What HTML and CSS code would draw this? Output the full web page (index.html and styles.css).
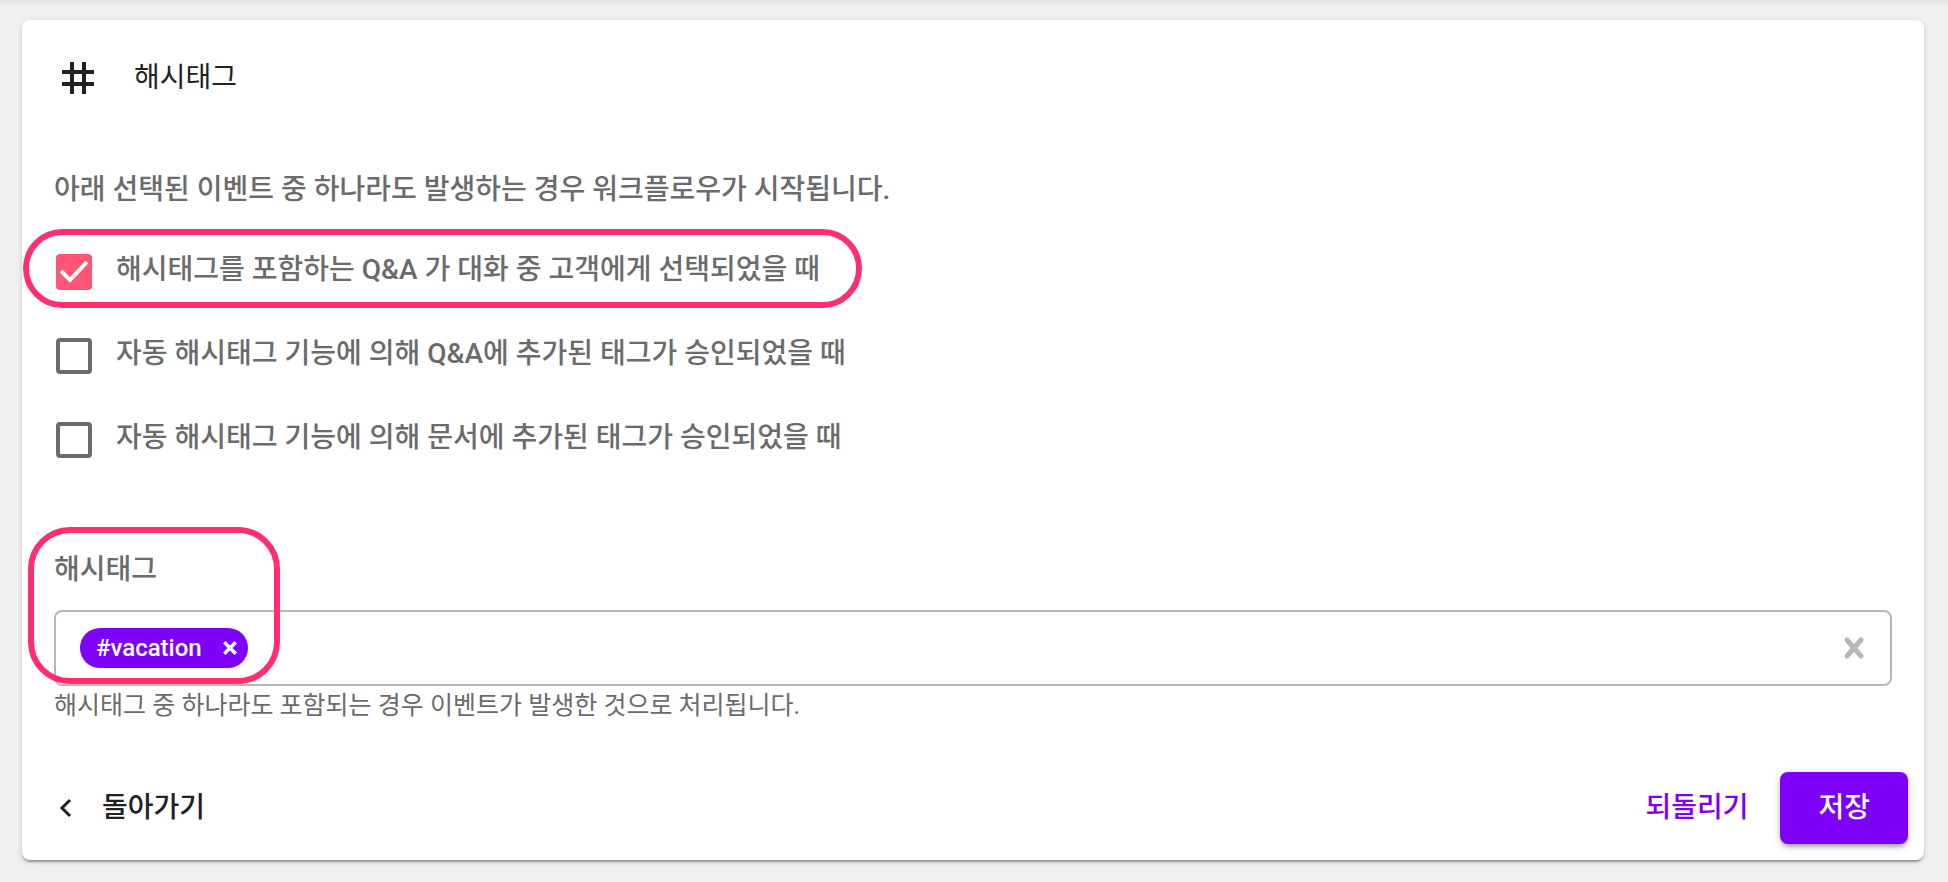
FILE: index.html
```html
<!DOCTYPE html>
<html lang="ko">

<head>
    <meta charset="utf-8">
    <meta name="viewport" content="width=device-width, initial-scale=1">
    <title>해시태그</title>
    <link rel="stylesheet" href="styles.css">
</head>

<body>
    <form class="card">
        <header class="card-header">
            <svg class="icon" viewBox="0 0 24 24" aria-hidden="true">
                <path d="M20 10V8h-4V4h-2v4h-4V4H8v4H4v2h4v4H4v2h4v4h2v-4h4v4h2v-4h4v-2h-4v-4h4zm-6 4h-4v-4h4v4z" />
            </svg>
            <h1 class="title">해시태그</h1>
        </header>

        <fieldset class="events">
            <legend class="intro">아래 선택된 이벤트 중 하나라도 발생하는 경우 워크플로우가 시작됩니다.</legend>
            <!--이벤트 선택-->
            <div class="option marked">
                <input class="check" type="checkbox" id="qna-selected" checked>
                <label for="qna-selected">해시태그를 포함하는 Q&amp;A 가 대화 중 고객에게 선택되었을 때</label>
            </div>
            <div class="option">
                <input class="check" type="checkbox" id="qna-approved">
                <label for="qna-approved">자동 해시태그 기능에 의해 Q&amp;A에 추가된 태그가 승인되었을 때</label>
            </div>
            <div class="option">
                <input class="check" type="checkbox" id="doc-approved">
                <label for="doc-approved">자동 해시태그 기능에 의해 문서에 추가된 태그가 승인되었을 때</label>
            </div>
        </fieldset>

        <!--해시태그 입력-->
        <div class="tags">
            <label class="tags-label" for="tag-input">해시태그</label>
            <div class="field">
                <span class="chip">
                    #vacation
                    <button class="chip-remove" type="button" aria-label="#vacation 삭제">
                        <svg viewBox="0 0 14 14" aria-hidden="true">
                            <path d="M2 2l10 10M12 2L2 12" />
                        </svg>
                    </button>
                </span>
                <input class="tag-input" type="text" id="tag-input">
                <button class="clear" type="button" aria-label="모두 지우기">
                    <svg viewBox="0 0 24 24" aria-hidden="true">
                        <path d="M5 4l14 16M19 4L5 20" />
                    </svg>
                </button>
            </div>
            <p class="helper">해시태그 중 하나라도 포함되는 경우 이벤트가 발생한 것으로 처리됩니다.</p>
        </div>

        <footer class="actions">
            <button class="button back" type="button">
                <svg viewBox="0 0 24 24" aria-hidden="true">
                    <path d="M16 4l-8 8 8 8" />
                </svg>
                돌아가기
            </button>
            <button class="button revert" type="reset">되돌리기</button>
            <button class="button save" type="submit">저장</button>
        </footer>
    </form>
</body>

</html>
```
FILE: styles.css
```css
*,
*::after {
    box-sizing: border-box;
}

body {
    margin: 0;
    padding: 20px 24px 22px 22px;
    min-height: 100vh;
    background: #f0f0f0 linear-gradient(#e4e4e4, #f0f0f0) no-repeat top / 100% 8px;
    font-family: Roboto, "Noto Sans CJK KR", sans-serif;
    font-size: 28px;
    line-height: 40px;
    color: #6b6b6b;
}

button,
input {
    font: inherit;
}

button {
    padding: 0;
    border: none;
    background: none;
    cursor: pointer;
}

.card {
    padding: 34px 16px 16px 32px;
    border-radius: 8px;
    background: #fff;
    box-shadow: 0 4px 2px -2px rgba(0, 0, 0, 0.2), 0 2px 2px rgba(0, 0, 0, 0.14), 0 2px 6px rgba(0, 0, 0, 0.12);
}

.card-header {
    display: flex;
    align-items: center;
    gap: 32px;
    color: #212121;
}

.icon {
    width: 48px;
    height: 48px;
    fill: currentColor;
}

.title {
    margin: 0;
    font-size: 28px;
    font-weight: 400;
}

.events {
    margin: 68px 0 0;
    padding: 0;
    border: none;
    font-weight: 500;
}

.intro {
    padding: 0;
    margin-bottom: 40px;
}

.option {
    display: flex;
    width: fit-content;
    gap: 24px;
    padding: 0 2px;
    margin-bottom: 44px;
}

.check {
    appearance: none;
    width: 36px;
    height: 36px;
    margin: 4px 0 0;
    border: 4px solid #6b6b6b;
    border-radius: 4px;
}

.check:checked {
    border-color: #ff5577;
    background: #ff5577 url("data:image/svg+xml,%3Csvg xmlns='http://www.w3.org/2000/svg' viewBox='0 0 36 36'%3E%3Cpath d='M5 17l9 9L31 8' fill='none' stroke='%23fff' stroke-width='4'/%3E%3C/svg%3E") center / 36px border-box;
}

/* 강조 테두리 */
.marked,
.tags {
    position: relative;
}

.marked::after,
.tags::after {
    content: "";
    position: absolute;
    border: 6px solid #ff2f6e;
    pointer-events: none;
}

.marked::after {
    top: -21px;
    right: -40px;
    bottom: -18px;
    left: -31px;
    border-radius: 40px;
}

.tags::after {
    top: -23px;
    left: -26px;
    width: 252px;
    height: 157px;
    border-radius: 42px;
}

.tags {
    margin: 48px 16px 0 0;
}

.tags-label {
    display: block;
    margin-bottom: 20px;
    font-weight: 500;
}

.field {
    display: flex;
    align-items: center;
    height: 76px;
    padding: 0 24px;
    border: 2px solid #b7b7b7;
    border-radius: 8px;
}

.chip {
    display: flex;
    align-items: center;
    gap: 20px;
    padding: 0 10px 0 16px;
    border-radius: 20px;
    background: #7f00f9;
    color: #fff;
    font-size: 24px;
    font-weight: 500;
}

.chip-remove,
.clear {
    display: flex;
}

.chip-remove svg {
    width: 16px;
    height: 16px;
    fill: none;
    stroke: #fff;
    stroke-width: 3;
}

.tag-input {
    flex: 1;
    min-width: 0;
    margin: 0 16px;
    border: none;
    outline: none;
    background: none;
}

.clear svg {
    width: 24px;
    height: 24px;
    fill: none;
    stroke: #b7b7b7;
    stroke-width: 5;
    stroke-linecap: round;
}

.helper {
    margin: 0;
    font-size: 25px;
}

.actions {
    display: flex;
    align-items: center;
    margin-top: 46px;
}

.button {
    height: 72px;
    font-weight: 500;
}

.back {
    display: flex;
    align-items: center;
    gap: 24px;
    margin-right: auto;
    color: #212121;
}

.back svg {
    width: 24px;
    height: 24px;
    fill: none;
    stroke: currentColor;
    stroke-width: 3;
}

.revert {
    margin-right: 32px;
    color: #7f00f9;
}

.save {
    padding: 0 38px;
    border-radius: 8px;
    background: #7f00f9;
    color: #fff;
    box-shadow: 0 4px 4px -2px rgba(0, 0, 0, 0.3), 0 2px 8px rgba(0, 0, 0, 0.2);
}
```
